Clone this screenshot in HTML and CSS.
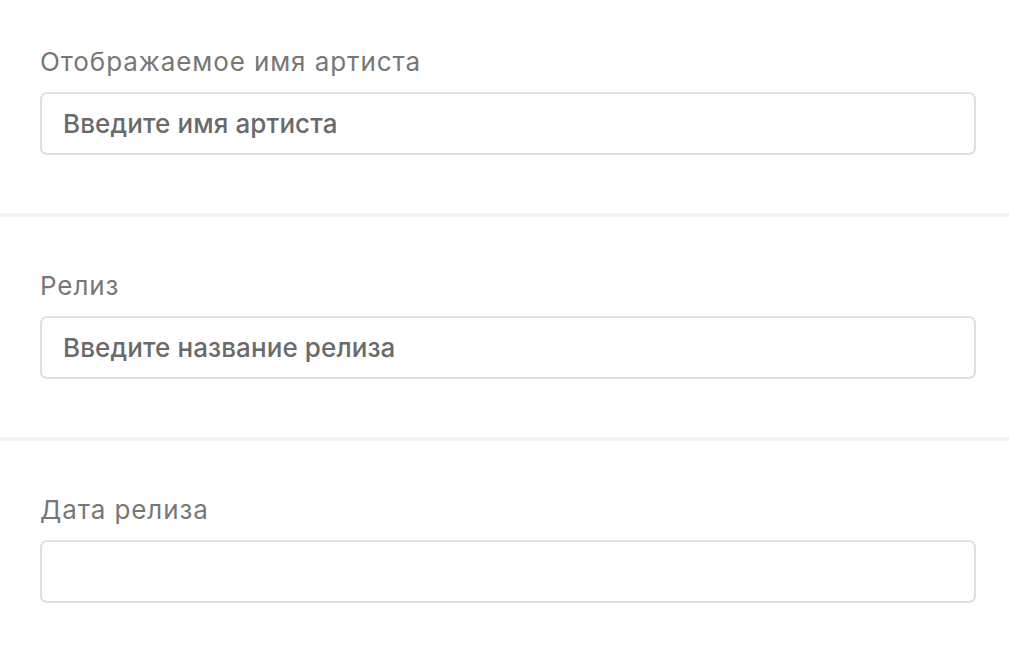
FILE: index.html
```html
<!DOCTYPE html>
<html lang="ru">
<head>
  <meta charset="UTF-8">
  <title>Релиз</title>
  <meta name="viewport" content="width=device-width, initial-scale=1">
  <link rel="stylesheet" href="styles.css">
</head>
<body>
  <form class="release-form">
    <div class="field first">
      <label for="artist">Отображаемое имя артиста</label>
      <input id="artist" type="text" placeholder="Введите имя артиста">
    </div>
    <div class="field">
      <label for="release">Релиз</label>
      <input id="release" type="text" placeholder="Введите название релиза">
    </div>
    <div class="field last">
      <label for="date">Дата релиза</label>
      <input id="date" type="text">
    </div>
  </form>
</body>
</html>
```

FILE: styles.css
```css
body { margin: 0; background: #fff; font-family: Inter, "Noto Sans", sans-serif; }
.release-form { display: flex; flex-direction: column; }
.field { display: flex; flex-direction: column; gap: 14px; padding: 53px 33px 58px 40px; border-bottom: 4px solid #f2f2f2; }
.field.first { padding-top: 46px; }
.field.last { border-bottom: none; }
label { font-size: 26px; line-height: 32px; letter-spacing: 0.9px; color: #777; }
input[type="text"] { box-sizing: border-box; height: 63px; padding: 0 21px; font-family: inherit; font-size: 26px; font-weight: 500; letter-spacing: 0.1px; color: #666; border: 2px solid #e0e0e0; border-radius: 7px; background: #fff; outline: none; }
input::placeholder { color: #6a6a6a; }
```
